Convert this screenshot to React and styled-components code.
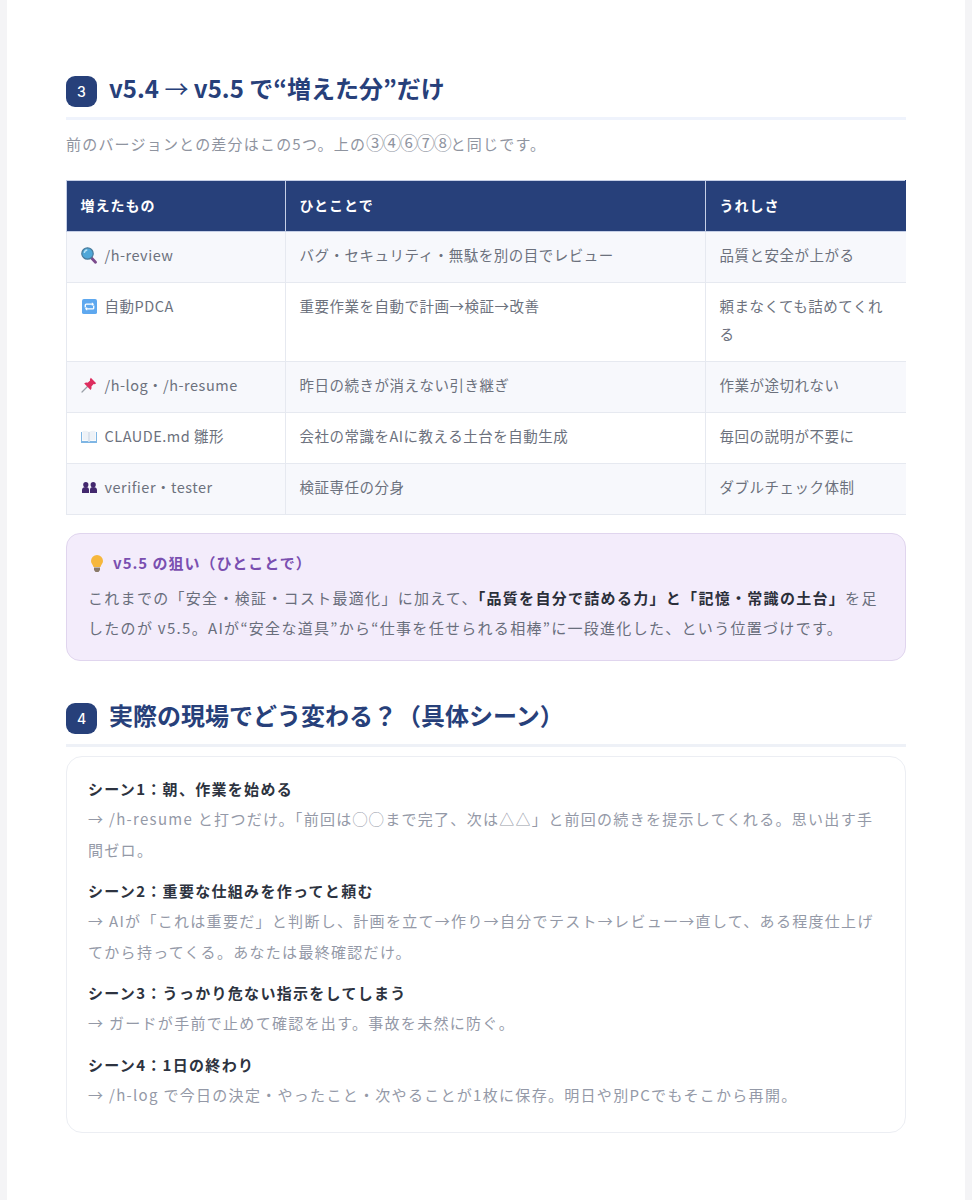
import styled, { createGlobalStyle } from 'styled-components';

const GlobalStyle = createGlobalStyle`
    html, body {
        margin:0;
        padding:0;
        background:#f4f4f6;
    }
    * {
        box-sizing:border-box;
    }
`;

const Sheet = styled.main`
    margin:0 7px;
    height:1200px;
    padding:76px 59px 0 59px;
    background:#fff;
    color:#6c717d;
    font-family:"Noto Sans CJK JP", "Noto Sans", sans-serif;
    font-size:14.5px;
`;
const Heading = styled.h2`
    display:flex;
    align-items:center;
    gap:12px;
    margin:${p => p.$top || 0}px 0 0 0;
    padding-bottom:10px;
    border-bottom:3px solid ${p => p.$line || '#eff3fc'};
    color:#27407a;
    font-size:24px;
    font-weight:700;
    line-height:31px;
`;
const HeadingText = styled.span`
    height:23px;
    margin-bottom:8px;
    line-height:23px;
`;
const ThinArrow = styled.span`
    font-weight:400;
`;
const Badge = styled.span`
    flex:none;
    display:flex;
    align-items:center;
    justify-content:center;
    width:31px;
    height:31px;
    border-radius:9px;
    background:#27407a;
    color:#fff;
    font-family:"Inter", sans-serif;
    font-size:14px;
    font-weight:500;
`;
const Lead = styled.p`
    margin:10px 0 22px 0;
    color:#8f949f;
    font-size:15px;
    letter-spacing:1.2px;
    line-height:28px;
`;
const Circled = styled.span`
    font-size:18px;
    letter-spacing:-1.1px;
    line-height:0;
`;
const Table = styled.table`
    width:839px;
    table-layout:fixed;
    border-collapse:collapse;
`;
const Head = styled.th`
    height:51px;
    padding:0 13px 3px 13.5px;
    background:#27407a;
    border:1px solid #c5cfe6;
    border-right-color:${p => p.$last ? '#27407a' : '#c5cfe6'};
    color:#fff;
    font-size:14px;
    font-weight:700;
    letter-spacing:1px;
    text-align:left;
`;
const Row = styled.tr`
    background:${p => p.$odd ? '#f7f8fc' : '#fff'};
`;
const Cell = styled.td`
    padding:9px 13px 13px 13.5px;
    border:1px solid #e6e9f0;
    border-right-color:${p => p.$last ? 'transparent' : '#e6e9f0'};
    letter-spacing:.5px;
    line-height:28px;
    vertical-align:top;
`;
const Feature = styled.span`
    display:flex;
    align-items:flex-start;
    gap:7px;
`;
const IconSlot = styled.span`
    flex:none;
    display:flex;
    align-items:center;
    justify-content:center;
    width:17px;
    height:28px;
`;
const Callout = styled.section`
    margin-top:18px;
    padding:14px 21px 17px 21px;
    background:#f3ecfb;
    border:1px solid #e0d5ee;
    border-radius:14px;
`;
const CalloutTitle = styled.div`
    display:flex;
    align-items:center;
    gap:9px;
    color:#7a4fb0;
    font-size:15px;
    font-weight:700;
    letter-spacing:1px;
    line-height:30px;
    svg {
        margin-left:2px;
    }
`;
const CalloutText = styled.p`
    margin:5px 0 0 0;
    color:#696e7c;
    font-size:15px;
    letter-spacing:1.3px;
    line-height:30px;
    strong {
        color:#2b2f3a;
        font-weight:700;
    }
`;
const SceneCard = styled.section`
    margin-top:9px;
    padding:17px 21px 10px 21px;
    height:377px;
    border:1px solid #eceef3;
    border-radius:16px;
`;
const Scene = styled.div`
    margin-bottom:11px;
`;
const SceneTitle = styled.div`
    color:#2d3340;
    font-size:15px;
    font-weight:700;
    letter-spacing:1.3px;
    line-height:30px;
`;
const SceneText = styled.div`
    color:#9499a7;
    font-size:15px;
    letter-spacing:1.3px;
    line-height:30.5px;
`;

const SearchIcon = () => (
    <svg width="16" height="17" viewBox="0 0 16 17">
        <path d="M10.500 11l4 4.300" stroke="#7b4a8c" strokeWidth="2.800" strokeLinecap="round"/>
        <circle cx="6.500" cy="6.500" r="5.700" fill="#4fa7d8" stroke="#4a7c9c" strokeWidth="1.200"/>
        <path d="M3.300 6a3.400 3.400 0 0 1 3-3" fill="none" stroke="#b9e2f5" strokeWidth="1.300"/>
    </svg>
);
const RepeatIcon = () => (
    <svg width="15" height="15" viewBox="0 0 16 16">
        <rect width="16" height="16" rx="2" fill="#5ea8ef"/>
        <path d="M3.500 9V6.500a1 1 0 0 1 1-1H11M12.500 7v2.500a1 1 0 0 1-1 1H5" fill="none" stroke="#fff" strokeWidth="1.400"/>
        <path d="M10.500 3.500l2.400 2-2.400 2zM5.500 8.500l-2.400 2 2.400 2z" fill="#fff"/>
    </svg>
);
const PinIcon = () => (
    <svg width="16" height="16" viewBox="0 0 16 16">
        <path d="M6.500 9.500L1 15" stroke="#9aa0a8" strokeWidth="1.200" strokeLinecap="round"/>
        <path d="M9.800 .8l5.400 5.400-1.500 1-1-.2-2.300 2.500c.4 1.400 0 2.600-.8 3.400L3.200 6.500c.9-.9 2.200-1.200 3.500-.8l2.400-2.300-.2-1z" fill="#dd2e5f"/>
    </svg>
);
const BookIcon = () => (
    <svg width="16" height="13" viewBox="0 0 16 13">
        <path d="M0 2h1v9h6l1 1 1-1h6V2h1v11H0z" fill="#7fb6e4"/>
        <path d="M1.500 1C4 .6 6.500.8 8 2c1.500-1.200 4-1.400 6.500-1v9.500C12 10 9.500 10.200 8 11.500 6.500 10.200 4 10 1.500 10.500z" fill="#eef2f7"/>
        <path d="M8 2v9.500" stroke="#b4c6d8" strokeWidth=".7"/>
    </svg>
);
const PeopleIcon = () => (
    <svg width="15" height="11" viewBox="0 0 15 11">
        <g fill="#43286e">
            <circle cx="3.800" cy="2.700" r="2.600"/>
            <circle cx="11.200" cy="2.700" r="2.600"/>
            <path d="M0 11V8c0-2 1.500-3 3.800-3s3.200 1 3.200 3v3zM8 11V8c0-2 .9-3 3.200-3S15 6 15 8v3z"/>
        </g>
    </svg>
);
const BulbIcon = () => (
    <svg width="14" height="17" viewBox="0 0 14 17">
        <path d="M7 0a6 6 0 0 1 6 6c0 2.500-2 3.800-2.500 6h-7C3 9.800 1 8.500 1 6a6 6 0 0 1 6-6z" fill="#f6b73c"/>
        <path d="M4 12.500h6v2.500L8.500 17h-3L4 15z" fill="#8a7a68"/>
    </svg>
);

const rows = [
    { icon: <SearchIcon/>, name: '/h-review', text: 'バグ・セキュリティ・無駄を別の目でレビュー', joy: '品質と安全が上がる' },
    { icon: <RepeatIcon/>, name: '自動PDCA', text: '重要作業を自動で計画→検証→改善', joy: '頼まなくても詰めてくれる' },
    { icon: <PinIcon/>, name: '/h-log・/h-resume', text: '昨日の続きが消えない引き継ぎ', joy: '作業が途切れない' },
    { icon: <BookIcon/>, name: 'CLAUDE.md 雛形', text: '会社の常識をAIに教える土台を自動生成', joy: '毎回の説明が不要に' },
    { icon: <PeopleIcon/>, name: 'verifier・tester', text: '検証専任の分身', joy: 'ダブルチェック体制' },
];

const scenes = [
    { title: 'シーン1：朝、作業を始める', text: '→ /h-resume と打つだけ。「前回は◯◯まで完了、次は△△」と前回の続きを提示してくれる。思い出す手間ゼロ。' },
    { title: 'シーン2：重要な仕組みを作ってと頼む', text: '→ AIが「これは重要だ」と判断し、計画を立て→作り→自分でテスト→レビュー→直して、ある程度仕上げてから持ってくる。あなたは最終確認だけ。' },
    { title: 'シーン3：うっかり危ない指示をしてしまう', text: '→ ガードが手前で止めて確認を出す。事故を未然に防ぐ。' },
    { title: 'シーン4：1日の終わり', text: '→ /h-log で今日の決定・やったこと・次やることが1枚に保存。明日や別PCでもそこから再開。' },
];

const App = () => {
    return (
        <>
            <GlobalStyle/>
            <Sheet>
                <Heading>
                    <Badge>3</Badge>
                    <HeadingText>v5.4 <ThinArrow>→</ThinArrow> v5.5 で“増えた分”だけ</HeadingText>
                </Heading>
                <Lead>前のバージョンとの差分はこの5つ。上の<Circled>③④⑥⑦⑧</Circled>と同じです。</Lead>
                <Table>
                    <colgroup>
                        <col width="219"/>
                        <col width="420"/>
                        <col width="200"/>
                    </colgroup>
                    <thead>
                        <tr>
                            <Head>増えたもの</Head>
                            <Head>ひとことで</Head>
                            <Head $last>うれしさ</Head>
                        </tr>
                    </thead>
                    <tbody>
                        {rows.map((row, i) => (
                            <Row key={row.name} $odd={i % 2 === 0}>
                                <Cell>
                                    <Feature>
                                        <IconSlot>{row.icon}</IconSlot>
                                        {row.name}
                                    </Feature>
                                </Cell>
                                <Cell>{row.text}</Cell>
                                <Cell $last>{row.joy}</Cell>
                            </Row>
                        ))}
                    </tbody>
                </Table>
                <Callout>
                    <CalloutTitle>
                        <BulbIcon/>
                        v5.5 の狙い（ひとことで）
                    </CalloutTitle>
                    <CalloutText>
                        これまでの「安全・検証・コスト最適化」に加えて、<strong>「品質を自分で詰める力」と「記憶・常識の土台」</strong>を足したのが v5.5。AIが“安全な道具”から“仕事を任せられる相棒”に一段進化した、という位置づけです。
                    </CalloutText>
                </Callout>
                <Heading $top={42} $line="#eef1f7">
                    <Badge>4</Badge>
                    <HeadingText>実際の現場でどう変わる？（具体シーン）</HeadingText>
                </Heading>
                <SceneCard>
                    {scenes.map(scene => (
                        <Scene key={scene.title}>
                            <SceneTitle>{scene.title}</SceneTitle>
                            <SceneText>{scene.text}</SceneText>
                        </Scene>
                    ))}
                </SceneCard>
            </Sheet>
        </>
    );
};

export default App;
